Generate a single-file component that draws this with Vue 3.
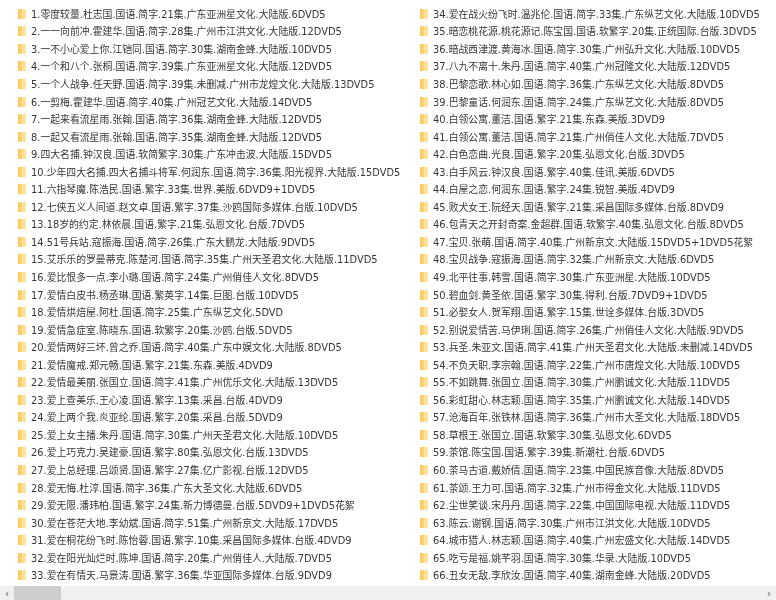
<script setup>
const names = `1.零度较量.杜志国.国语.简字.21集.广东亚洲星文化.大陆版.6DVD5
2.一一向前冲.霍建华.国语.简字.28集.广州市江洪文化.大陆版.12DVD5
3.一不小心爱上你.江铠同.国语.简字.30集.湖南金蜂.大陆版.10DVD5
4.一个和八个.张桐.国语.简字.39集.广东亚洲星文化.大陆版.12DVD5
5.一个人战争.任天野.国语.简字.39集.未删减.广州市龙煌文化.大陆版.13DVD5
6.一剪梅.霍建华.国语.简字.40集.广州冠艺文化.大陆版.14DVD5
7.一起来看流星雨.张翰.国语.简字.36集.湖南金蜂.大陆版.12DVD5
8.一起又看流星雨.张翰.国语.简字.35集.湖南金蜂.大陆版.12DVD5
9.四大名捕.钟汉良.国语.软简繁字.30集.广东冲击波.大陆版.15DVD5
10.少年四大名捕.四大名捕斗将军.何润东.国语.简字.36集.阳光视界.大陆版.15DVD5
11.六指琴魔.陈浩民.国语.繁字.33集.世界.美版.6DVD9+1DVD5
12.七侠五义人间道.赵文卓.国语.繁字.37集.沙鸥国际多媒体.台版.10DVD5
13.18岁的约定.林依晨.国语.繁字.21集.弘恩文化.台版.7DVD5
14.51号兵站.寇振海.国语.简字.26集.广东大鹏龙.大陆版.9DVD5
15.艾乐乐的罗曼蒂克.陈楚河.国语.简字.35集.广州天圣君文化.大陆版.11DVD5
16.爱比恨多一点.李小璐.国语.简字.24集.广州俏佳人文化.8DVD5
17.爱情白皮书.杨丞琳.国语.繁英字.14集.巨图.台版.10DVD5
18.爱情烘焙屋.阿杜.国语.简字.25集.广东纵艺文化.5DVD
19.爱情急症室.陈晓东.国语.软繁字.20集.沙鸥.台版.5DVD5
20.爱情两好三坏.曾之乔.国语.简字.40集.广东中娱文化.大陆版.8DVD5
21.爱情魔戒.郑元畅.国语.繁字.21集.东森.美版.4DVD9
22.爱情最美丽.张国立.国语.简字.41集.广州优乐文化.大陆版.13DVD5
23.爱上查美乐.王心凌.国语.繁字.13集.采昌.台版.4DVD9
24.爱上两个我.炎亚纶.国语.繁字.20集.采昌.台版.5DVD9
25.爱上女主播.朱丹.国语.简字.30集.广州天圣君文化.大陆版.10DVD5
26.爱上巧克力.吴建豪.国语.繁字.80集.弘恩文化.台版.13DVD5
27.爱上总经理.吕颂贤.国语.繁字.27集.亿广影视.台版.12DVD5
28.爱无悔.杜淳.国语.简字.36集.广东大圣文化.大陆版.6DVD5
29.爱无限.潘玮柏.国语.繁字.24集.新力博德曼.台版.5DVD9+1DVD5花絮
30.爱在苍茫大地.李幼斌.国语.简字.51集.广州新京文.大陆版.17DVD5
31.爱在桐花纷飞时.陈怡蓉.国语.繁字.10集.采昌国际多媒体.台版.4DVD9
32.爱在阳光灿烂时.陈坤.国语.简字.20集.广州俏佳人.大陆版.7DVD5
33.爱在有情天.马景涛.国语.繁字.36集.华亚国际多媒体.台版.9DVD9
34.爱在战火纷飞时.温兆伦.国语.简字.33集.广东纵艺文化.大陆版.10DVD5
35.暗恋桃花源.桃花源记.陈宝国.国语.软繁字.20集.正统国际.台版.3DVD5
36.暗战西津渡.黄海冰.国语.简字.30集.广州弘升文化.大陆版.10DVD5
37.八九不离十.朱丹.国语.简字.40集.广州冠隆文化.大陆版.12DVD5
38.巴黎恋歌.林心如.国语.简字.36集.广东纵艺文化.大陆版.8DVD5
39.巴黎童话.何润东.国语.简字.24集.广东纵艺文化.大陆版.8DVD5
40.白领公寓.董洁.国语.繁字.21集.东森.美版.3DVD9
41.白领公寓.董洁.国语.简字.21集.广州俏佳人文化.大陆版.7DVD5
42.白色恋曲.光良.国语.繁字.20集.弘恩文化.台版.3DVD5
43.白手风云.钟汉良.国语.繁字.40集.佳讯.美版.6DVD5
44.白屋之恋.何润东.国语.繁字.24集.锐智.美版.4DVD9
45.败犬女王.阮经天.国语.繁字.21集.采昌国际多媒体.台版.8DVD9
46.包青天之开封奇案.金超群.国语.软繁字.40集.弘恩文化.台版.8DVD5
47.宝贝.张萌.国语.简字.40集.广州新京文.大陆版.15DVD5+1DVD5花絮
48.宝贝战争.寇振海.国语.简字.32集.广州新京文.大陆版.6DVD5
49.北平往事.韩雪.国语.简字.30集.广东亚洲星.大陆版.10DVD5
50.碧血剑.黄圣依.国语.繁字.30集.得利.台版.7DVD9+1DVD5
51.必娶女人.贺军翔.国语.繁字.15集.世诠多媒体.台版.3DVD5
52.别说爱情苦.马伊琍.国语.简字.26集.广州俏佳人文化.大陆版.9DVD5
53.兵圣.朱亚文.国语.简字.41集.广州天圣君文化.大陆版.未删减.14DVD5
54.不负天职.李宗翰.国语.简字.22集.广州市唐煌文化.大陆版.10DVD5
55.不如跳舞.张国立.国语.简字.30集.广州鹏诚文化.大陆版.11DVD5
56.彩虹甜心.林志颖.国语.简字.35集.广州鹏诚文化.大陆版.14DVD5
57.沧海百年.张铁林.国语.简字.36集.广州市大圣文化.大陆版.18DVD5
58.草根王.张国立.国语.软繁字.30集.弘恩文化.6DVD5
59.茶馆.陈宝国.国语.繁字.39集.新潮社.台版.6DVD5
60.茶马古道.戴娇倩.国语.简字.23集.中国民族音像.大陆版.8DVD5
61.茶颂.王力可.国语.简字.32集.广州市得金文化.大陆版.11DVD5
62.尘世笑谈.宋丹丹.国语.简字.22集.中国国际电视.大陆版.11DVD5
63.陈云.谢钢.国语.简字.30集.广州市江洪文化.大陆版.10DVD5
64.城市猎人.林志颖.国语.简字.40集.广州宏盛文化.大陆版.14DVD5
65.吃亏是福.姚芊羽.国语.简字.30集.华录.大陆版.10DVD5
66.丑女无敌.李欣汝.国语.简字.40集.湖南金蜂.大陆版.20DVD5`.split('\n')

const columns = [names.slice(0, 33), names.slice(33)]
</script>

<template>
  <div class="explorer">
    <div class="files">
      <ul v-for="(col, i) in columns" :key="i" class="column">
        <li v-for="name in col" :key="name" class="file">
          <svg class="folder" width="8" height="10" viewBox="0 0 8 10">
            <rect x="0" y="0" width="8" height="10" fill="#fde3a0" />
            <rect x="0" y="0" width="4" height="10" fill="#fcd474" />
            <rect x="0" y="0" width="1.5" height="10" fill="#f8c95c" />
          </svg>
          <span>{{ name }}</span>
        </li>
      </ul>
    </div>
    <div class="scrollbar">
      <button class="arrow">‹</button>
      <div class="track"><div class="thumb"></div></div>
      <button class="arrow">›</button>
    </div>
  </div>
</template>

<style scoped>
.explorer {
  width: 776px;
  height: 600px;
  display: flex;
  flex-direction: column;
  overflow: hidden;
  background: #fff;
  font-family: "DejaVu Sans", "Noto Sans CJK SC", sans-serif;
}
.files {
  flex: 1;
  display: grid;
  grid-template-columns: 402px 1fr;
  padding: 5px 0 0 18px;
  filter: blur(0.35px);
}
.column {
  list-style: none;
  margin: 0;
  padding: 0;
}
.file {
  display: flex;
  align-items: center;
  gap: 5px;
  height: 17.55px;
  font-size: 9.85px;
  color: #363636;
  white-space: nowrap;
}
.folder {
  flex: none;
}
.scrollbar {
  height: 14px;
  display: flex;
  background: #f0f0f0;
}
.arrow {
  width: 14px;
  padding: 0;
  border: 0;
  background: none;
  color: #555;
  font: 10px/13px "DejaVu Sans", sans-serif;
}
.track {
  flex: 1;
}
.thumb {
  width: 47px;
  height: 100%;
  background: #cdcdcd;
}
</style>
